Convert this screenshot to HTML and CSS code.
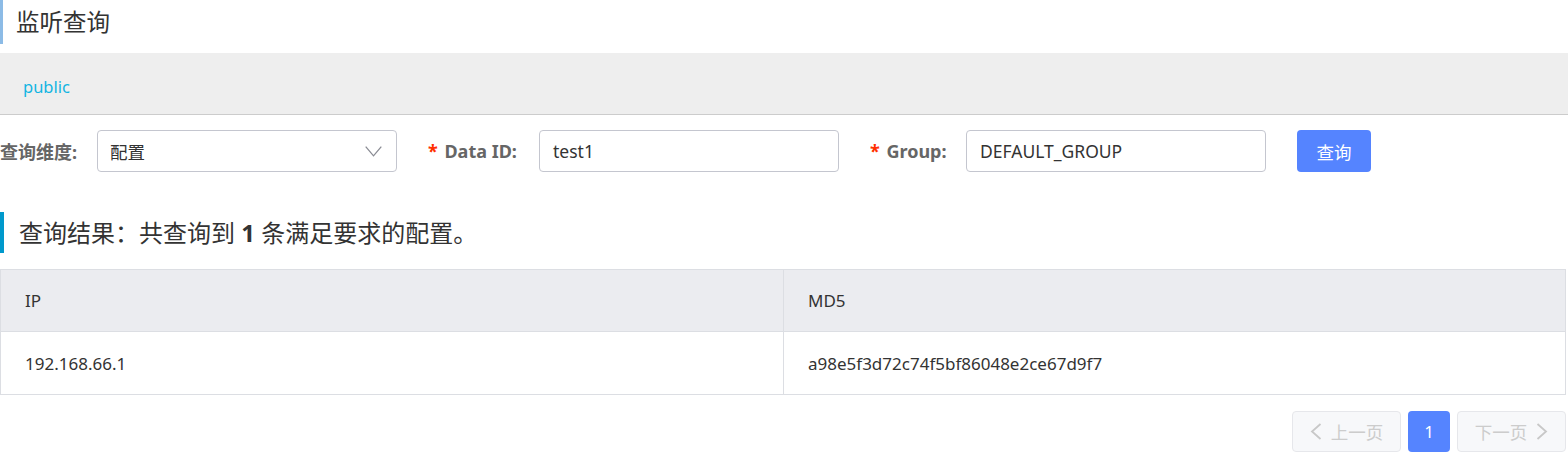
FILE: index.html
```html
<!DOCTYPE html>
<html lang="zh-CN">
<head>
<meta charset="utf-8">
<title>监听查询</title>
<link rel="stylesheet" href="styles.css">
</head>
<body>
<div class="page">
  <h1 class="page-title">监听查询</h1>
  <div class="ns-bar"><span class="ns-item">public</span></div>

  <form class="query-form">
    <div class="form-item">
      <label class="form-label label-dim">查询维度:</label>
      <div class="select">
        <span class="select-value">配置</span>
        <svg class="select-arrow" width="17" height="11" viewBox="0 0 17 11"><path d="M0.7 0.7 L8.5 9.8 L16.3 0.7" fill="none" stroke="#8a8c94" stroke-width="1.3"/></svg>
      </div>
    </div>
    <div class="form-item">
      <label class="form-label label-id"><span class="req">*</span> Data ID:</label>
      <div class="input">test1</div>
    </div>
    <div class="form-item">
      <label class="form-label label-group"><span class="req">*</span> Group:</label>
      <div class="input">DEFAULT_GROUP</div>
    </div>
    <button type="button" class="btn-primary">查询</button>
  </form>

  <h2 class="result-title">查询结果：共查询到 <strong>1</strong> 条满足要求的配置。</h2>

  <table class="result-table">
    <thead>
      <tr><th>IP</th><th>MD5</th></tr>
    </thead>
    <tbody>
      <tr><td>192.168.66.1</td><td>a98e5f3d72c74f5bf86048e2ce67d9f7</td></tr>
    </tbody>
  </table>

  <div class="pagination">
    <button type="button" class="page-btn page-nav" disabled>
      <svg width="12" height="17" viewBox="0 0 12 17"><path d="M10.5 1 L2 8.5 L10.5 16" fill="none" stroke="#c8c8c8" stroke-width="1.8"/></svg>
      <span>上一页</span>
    </button>
    <button type="button" class="page-btn page-current">1</button>
    <button type="button" class="page-btn page-nav" disabled>
      <span>下一页</span>
      <svg width="12" height="17" viewBox="0 0 12 17"><path d="M1.5 1 L10 8.5 L1.5 16" fill="none" stroke="#c8c8c8" stroke-width="1.8"/></svg>
    </button>
  </div>
</div>
</body>
</html>
```

FILE: styles.css
```css
* { box-sizing: border-box; }

body {
  margin: 0;
  background: #fff;
  font-family: "Noto Sans", "Noto Sans CJK SC", sans-serif;
  color: #333;
}

.page {
  width: 1568px;
}

.page-title {
  margin: 0;
  height: 44px;
  line-height: 44px;
  border-left: 3px solid #8cbbe6;
  padding-left: 13px;
  font-size: 23.5px;
  font-weight: normal;
  color: #333;
}

.ns-bar {
  margin-top: 9px;
  height: 62px;
  background: #eeeeee;
  border-bottom: 1px solid #cccccc;
  padding-left: 23px;
  padding-top: 5px;
  display: flex;
  align-items: center;
}

.ns-item {
  font-size: 16.5px;
  color: #12b5e2;
}

.query-form {
  margin: 15px 0 0;
  display: flex;
  align-items: center;
  height: 42px;
}

.form-item {
  display: flex;
  align-items: center;
  margin-right: 31px;
}

.form-label {
  font-size: 18px;
  font-weight: bold;
  color: #666;
  margin-right: 19px;
  white-space: nowrap;
}

.label-dim { width: 78px; }
.label-id { width: 92px; }
.label-group { width: 77px; }

.req {
  color: #ff3000;
  margin-right: 2px;
}

.select, .input {
  width: 300px;
  height: 42px;
  border: 1px solid #c4c6cf;
  border-radius: 4px;
  display: flex;
  align-items: center;
  padding: 0 13px;
  font-size: 17.5px;
  color: #333;
}

.select {
  justify-content: space-between;
  padding-left: 12px;
  padding-right: 14px;
}

.btn-primary {
  width: 74px;
  height: 42px;
  border: none;
  border-radius: 4px;
  background: #5584ff;
  color: #fff;
  font-family: inherit;
  font-size: 17.5px;
  padding: 0;
}

.result-title {
  margin: 40px 0 0;
  height: 41px;
  line-height: 41px;
  border-left: 4px solid #0099cc;
  padding-left: 15px;
  font-size: 24px;
  font-weight: normal;
  color: #333;
}

.result-title strong {
  font-weight: bold;
}

.result-table {
  margin-top: 16px;
  width: 1566px;
  border-collapse: collapse;
  table-layout: fixed;
  font-size: 17px;
  color: #333;
}

.result-table th,
.result-table td {
  border: 1px solid #dcdee3;
  text-align: left;
  padding: 0 24px;
  font-weight: normal;
}

.result-table th {
  height: 62px;
  background: #ebecf0;
}

.result-table td {
  height: 63px;
}

.result-table th:first-child,
.result-table td:first-child {
  width: 783px;
}

.pagination {
  width: 1566px;
  margin-top: 16px;
  display: flex;
  justify-content: flex-end;
  gap: 7px;
}

.page-btn {
  height: 41px;
  border-radius: 4px;
  font-family: inherit;
  font-size: 17.5px;
  padding: 0;
  display: flex;
  align-items: center;
  justify-content: center;
  gap: 9px;
}

.page-nav {
  width: 109px;
  background: #f7f8fa;
  border: 1px solid #e6e7eb;
  color: #cccccc;
}

.page-current {
  width: 42px;
  background: #5584ff;
  border: none;
  color: #fff;
  font-size: 17px;
}
```
